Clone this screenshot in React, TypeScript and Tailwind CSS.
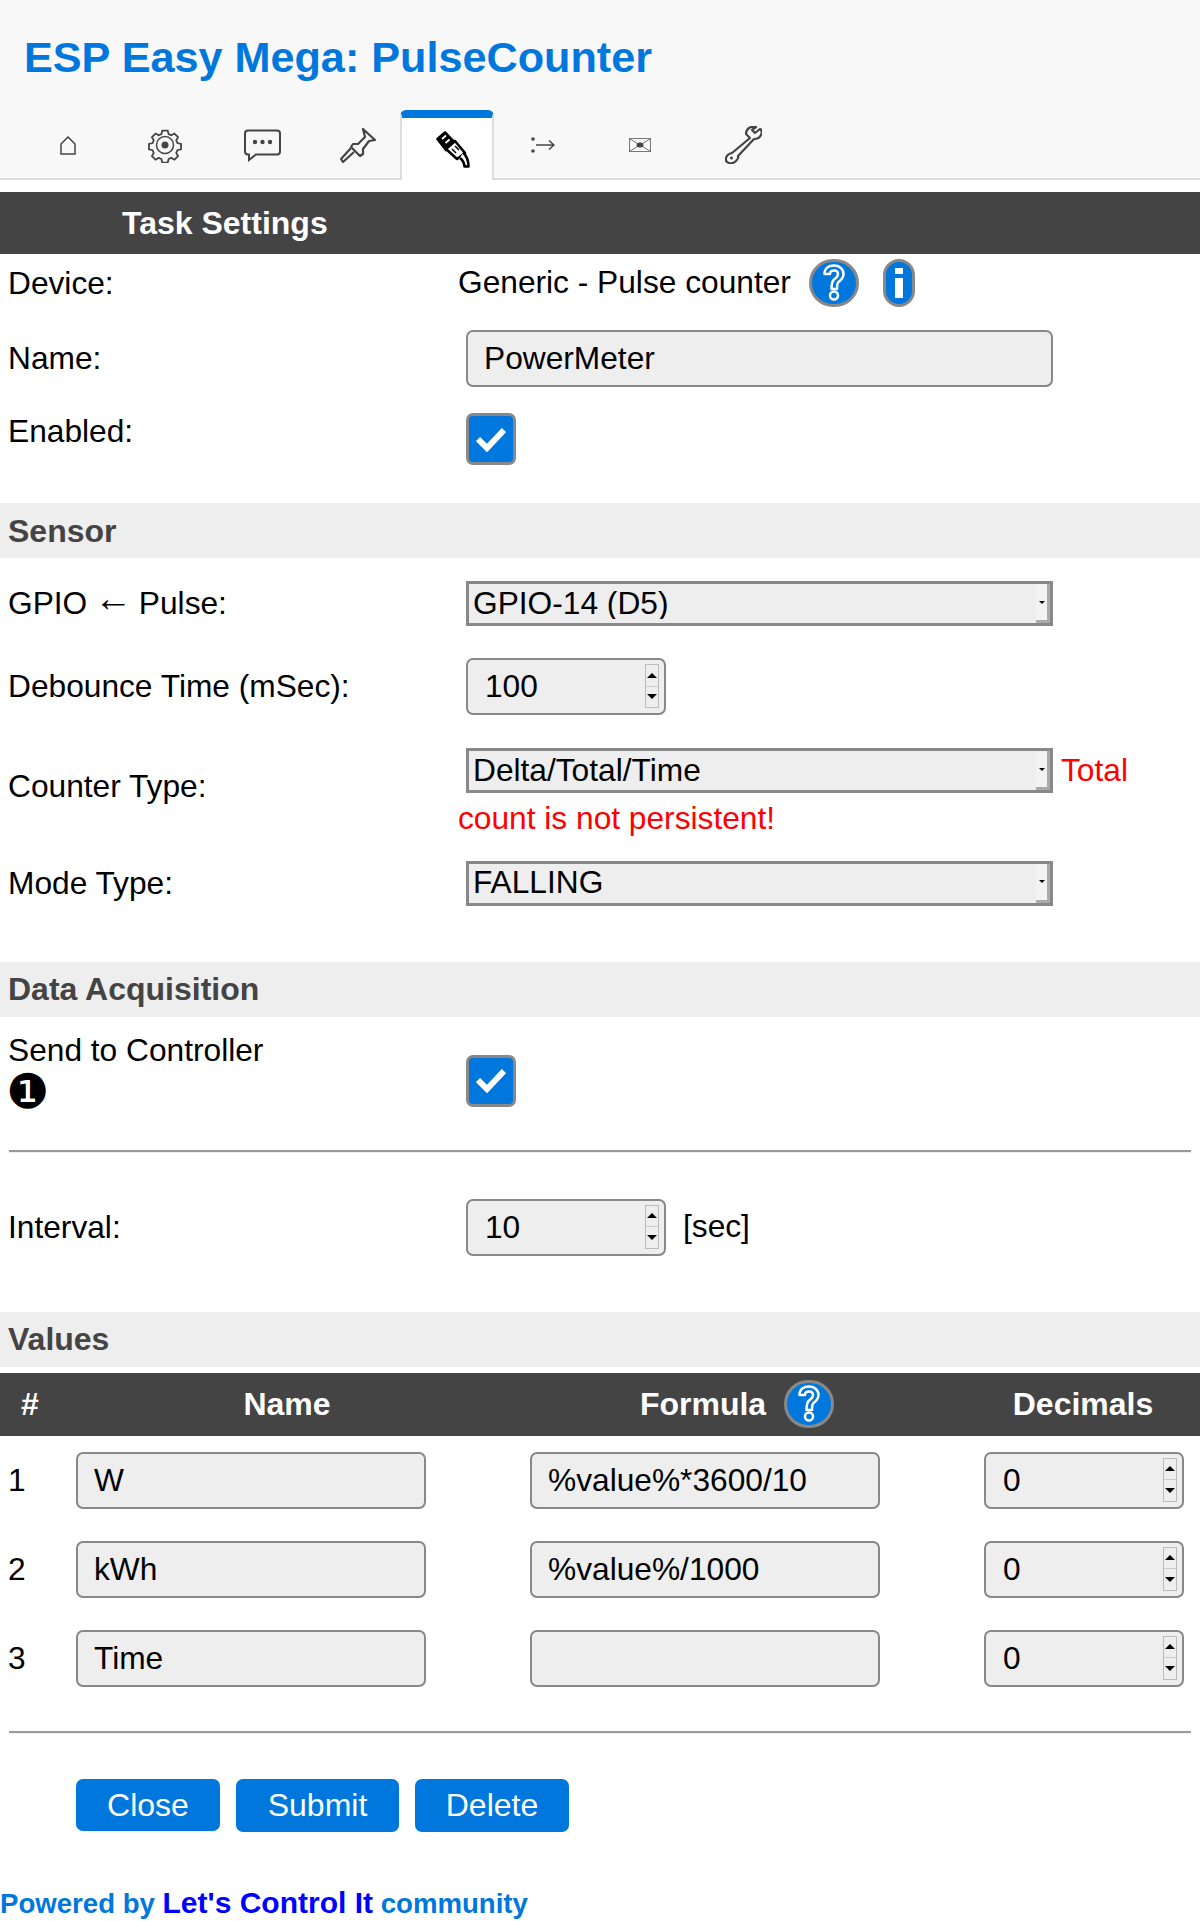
import React from "react"

const font = "font-['Liberation_Sans',Arial,sans-serif]"

const Gear = () => (
  <svg width="36" height="36" viewBox="0 0 36 36" fill="none" stroke="#444" strokeWidth="2">
    <path d="M15 2h6l1 4 3 1.300 3.500-2 4 4-2 3.500 1.300 3 4 1v6l-4 1-1.300 3 2 3.500-4 4-3.500-2-3 1.300-1 4h-6l-1-4-3-1.300-3.500 2-4-4 2-3.500-1.300-3-4-1v-6l4-1 1.300-3-2-3.500 4-4 3.500 2 3-1.300z" transform="translate(1.800 1.800) scale(.9)" />
    <circle cx="18" cy="18" r="8.500" strokeWidth="1.500" />
    <circle cx="18" cy="18" r="3.500" fill="#444" stroke="none" />
  </svg>
)

const Balloon = () => (
  <svg width="37" height="33" viewBox="0 0 37 33" fill="none" stroke="#444" strokeWidth="2">
    <path d="M4 1.500h29q3 0 3 3v18q0 3-3 3H12L5 31v-5.500H4q-3 0-3-3v-18q0-3 3-3z" />
    <circle cx="11" cy="13" r="2.200" fill="#444" stroke="none" />
    <circle cx="18.500" cy="13" r="2.200" fill="#444" stroke="none" />
    <circle cx="26" cy="13" r="2.200" fill="#444" stroke="none" />
  </svg>
)

const Pin = () => (
  <svg width="36" height="35" viewBox="0 0 36 35" fill="none" stroke="#444" strokeWidth="2.200" strokeLinejoin="round">
    <path d="M23 1l12 11-6 1-6 8 0 5-3 2-9-9 2-3h5l7-7z" />
    <path d="M11 20L1 31l2 3 11-10" />
  </svg>
)

const Plug = () => (
  <svg width="34" height="37" viewBox="0 0 34 37" fill="none" stroke="#000" strokeWidth="2.600" strokeLinejoin="round">
    <path d="M1.500 8L9 1.500 18 11l-8 8z" fill="#000" />
    <path d="M6 8l4-3.500M9.500 12l4-3.500" stroke="#fff" strokeWidth="1.800" />
    <path d="M10 18l9-8 10 12-8 6z" fill="#fff" />
    <path d="M16 18l4 4M19 15l4 4" strokeWidth="1.500" />
    <path d="M24 27q4 3 4.500 8.500h4q0-9-5.500-14" fill="#fff" />
  </svg>
)

const DotArrow = () => (
  <svg width="24" height="16" viewBox="0 0 24 16" fill="none" stroke="#444" strokeWidth="1.500">
    <circle cx="2" cy="2" r="1.800" fill="#444" stroke="none" />
    <circle cx="2" cy="14" r="1.800" fill="#444" stroke="none" />
    <path d="M5 8h18M18 3.500L23 8l-5 4.500" />
  </svg>
)

const Envelope = () => (
  <svg width="22" height="14" viewBox="0 0 22 14" fill="none" stroke="#777" strokeWidth="1">
    <rect x=".5" y=".5" width="21" height="13" />
    <path d="M1 1l20 12M21 1L1 13" />
    <ellipse cx="11" cy="7" rx="3.500" ry="2.500" fill="#444" stroke="none" />
  </svg>
)

const Wrench = () => (
  <svg width="37" height="38" viewBox="0 0 37 38" fill="none" stroke="#444" strokeWidth="2.200" strokeLinejoin="round">
    <path d="M25 12L7 27q-5 1-6 5t3 5q4 1 7-2t2-5l16-17q5 0 7-4t-1-6l-5 4-3-3 4-3q-4-1-7 1t-3 6z" />
    <circle cx="6.500" cy="32" r="1.500" fill="#444" stroke="none" />
  </svg>
)

const Home = () => (
  <svg width="16" height="19" viewBox="0 0 16 19" fill="none" stroke="#444" strokeWidth="1.500">
    <path d="M1 18V8l7-7 7 7v10z" />
  </svg>
)

const HelpIcon = () => (
  <span className="inline-flex h-[48px] w-[50px] items-center justify-center rounded-full border-[3px] border-[#888] bg-[#0077dd]">
    <svg width="22" height="38" viewBox="0 0 22 38" fill="none" stroke="#fff" strokeWidth="2.500" strokeLinejoin="round">
      <path d="M1.500 10C1.500 4 6 1.500 11 1.500s9.500 3 9.500 8.500c0 4.500-2.500 6-5 8-1.500 1.200-1.500 3-1.500 7H8.500c0-5 .2-7.500 2.500-9.500 2-1.800 4-2.500 4-5.500 0-2-1.500-3.500-4-3.500S7 8 7 10z" />
      <circle cx="11" cy="31.500" r="4" />
    </svg>
  </span>
)

const InfoIcon = () => (
  <span className="inline-flex h-[48px] w-[32px] items-center justify-center rounded-full border-[3px] border-[#888] bg-[#0077dd]">
    <svg width="10" height="30" viewBox="0 0 10 30" fill="#fff">
      <rect x="1" y="0" width="8" height="6" />
      <rect x="1" y="10" width="8" height="20" />
    </svg>
  </span>
)

const TextInput = ({ value, className }: { value: string; className: string }) => (
  <input
    readOnly
    value={value}
    className={`block h-[57px] rounded-[7px] border-2 border-[#888] bg-[#eee] pl-[16px] text-[31.7px] text-black outline-none ${font} ${className}`}
  />
)

const NumberInput = ({ value, className }: { value: string; className: string }) => (
  <div className={`relative h-[57px] ${className}`}>
    <input
      readOnly
      value={value}
      className={`block h-full w-full rounded-[7px] border-2 border-[#888] bg-[#eee] pl-[17px] text-[31.7px] text-black outline-none ${font}`}
    />
    <div className="absolute right-[7px] top-[6px] flex h-[44px] w-[14px] flex-col border border-[#bbb] bg-[#eee]">
      <div className="flex flex-1 items-center justify-center border-b border-[#ccc]">
        <div className="h-0 w-0 border-x-[5px] border-b-[5px] border-x-transparent border-b-black" />
      </div>
      <div className="flex flex-1 items-center justify-center">
        <div className="h-0 w-0 border-x-[5px] border-t-[5px] border-x-transparent border-t-black" />
      </div>
    </div>
  </div>
)

const Select = ({ value }: { value: string }) => (
  <div className="relative h-[45px] w-[587px]">
    <select className={`block h-full w-full appearance-none rounded-none border-[3px] border-[#888] bg-[#eee] pl-[4px] text-[31.7px] leading-none text-black outline-none ${font}`}>
      <option>{value}</option>
    </select>
    <div className="absolute bottom-[3px] right-[3px] top-[3px] flex w-[14px] items-center justify-center border-b-[3px] border-r-[3px] border-b-[#aaa] border-r-[#aaa] bg-[#f2f2f2]">
      <div className="h-0 w-0 border-x-[3px] border-t-[3px] border-x-transparent border-t-black" />
    </div>
  </div>
)

const CheckBox = () => (
  <div className="flex h-[52px] w-[50px] items-center justify-center rounded-[7px] border-[3px] border-[#888] bg-[#0077dd]">
    <svg width="30" height="25" viewBox="0 0 30 25" fill="none" stroke="#fff" strokeWidth="6">
      <path d="M2 12l9 9L28 3" />
    </svg>
  </div>
)

const SubHeader = ({ title, className }: { title: string; className: string }) => (
  <div className={`flex h-[55px] items-center bg-[#eee] pl-[8px] text-[32px] font-bold text-[#444] ${className}`}>{title}</div>
)

const Label = ({ children, className = "w-[466px]" }: { children: React.ReactNode; className?: string }) => (
  <div className={`shrink-0 pl-[8px] leading-[37px] ${className}`}>{children}</div>
)

const Rule = ({ className }: { className: string }) => (
  <div className={`mx-[9px] h-[3px] border-t-2 border-[#999] bg-[#eee] ${className}`} />
)

const tabs = [
  { w: "w-[95px]", icon: <Home /> },
  { w: "w-[100px]", icon: <Gear /> },
  { w: "w-[95px]", icon: <Balloon /> },
  { w: "w-[90px] pl-[6px]", icon: <Pin /> },
  { w: "w-[94px] pl-[12px]", icon: <Plug />, active: true },
  { w: "w-[98px]", icon: <DotArrow /> },
  { w: "w-[96px]", icon: <Envelope /> },
  { w: "w-[110px]", icon: <Wrench /> },
]

const rows = [
  { n: "1", name: "W", formula: "%value%*3600/10", mt: "mt-[16px]" },
  { n: "2", name: "kWh", formula: "%value%/1000", mt: "mt-[32px]" },
  { n: "3", name: "Time", formula: "", mt: "mt-[32px]" },
]

export default function App() {
  return (
    <div className={`h-[1921px] overflow-hidden bg-white text-[31.7px] text-black ${font}`}>
      <div className="h-[180px] border-b-2 border-[#ddd] bg-[#f8f8f8] pl-[24px]">
        <h1 className="pt-[30px] text-[43.2px] font-bold leading-[54px] text-[#0077dd]">ESP Easy Mega: PulseCounter</h1>
        <div className="-ml-[4px] mt-[26px] flex h-[70px]">
          {tabs.map((tab, index) => (
            <div
              key={index}
              className={`flex items-center justify-center ${tab.w} ${
                tab.active ? "h-[70px] rounded-t-[6px] border-x-2 border-t-[8px] border-x-[#ddd] border-t-[#0077dd] bg-white" : "h-[68px] pt-[2px]"
              }`}
            >
              {tab.icon}
            </div>
          ))}
        </div>
      </div>

      <div className="mt-[12px] flex h-[62px] items-center bg-[#444] pl-[122px] text-[32px] font-bold text-white">Task Settings</div>

      <div className="flex h-[58px] items-center">
        <Label className="w-[458px]">Device:</Label>
        <span>Generic - Pulse counter</span>
        <span className="ml-[18px] flex items-center gap-[24px]">
          <HelpIcon />
          <InfoIcon />
        </span>
      </div>

      <div className="mt-[18px] flex items-center">
        <Label>Name:</Label>
        <TextInput value="PowerMeter" className="w-[587px]" />
      </div>

      <div className="mt-[26px] flex items-start">
        <Label>Enabled:</Label>
        <CheckBox />
      </div>

      <SubHeader title="Sensor" className="mt-[38px]" />

      <div className="mt-[23px] flex items-center">
        <Label className="w-[466px] pb-[4px]">
          GPIO <span className="relative -top-[3px] -mx-[2px] font-['Liberation_Serif',serif] text-[38px] leading-none">←</span> Pulse:
        </Label>
        <Select value="GPIO-14 (D5)" />
      </div>

      <div className="mt-[32px] flex items-center">
        <Label>Debounce Time (mSec):</Label>
        <NumberInput value="100" className="w-[200px]" />
      </div>

      <div className="mt-[32px] flex items-start">
        <Label className="w-[458px] pt-[21px]">Counter Type:</Label>
        <div>
          <div className="ml-[8px] flex items-center gap-[8px]">
            <Select value="Delta/Total/Time" />
            <span className="text-[#f00]">Total</span>
          </div>
          <div className="mt-[5px] leading-[37px] text-[#f00]">count is not persistent!</div>
        </div>
      </div>

      <div className="mt-[24px] flex items-center">
        <Label>Mode Type:</Label>
        <Select value="FALLING" />
      </div>

      <SubHeader title="Data Acquisition" className="mt-[56px]" />

      <div className="mt-[15px] flex items-start">
        <Label>
          Send to Controller
          <div className="-ml-[2px] font-['DejaVu_Sans',sans-serif] text-[48px] leading-[44px]">❶</div>
        </Label>
        <div className="pt-[23px]">
          <CheckBox />
        </div>
      </div>

      <Rule className="mt-[37px]" />

      <div className="mt-[46px] flex items-center">
        <Label>Interval:</Label>
        <NumberInput value="10" className="w-[200px]" />
        <span className="ml-[17px]">[sec]</span>
      </div>

      <SubHeader title="Values" className="mt-[56px]" />

      <div className="mt-[6px] grid h-[63px] grid-cols-[60px_454px_446px_240px] items-center bg-[#444] text-center text-[32px] font-bold text-white">
        <span>#</span>
        <span>Name</span>
        <span className="flex items-center justify-center gap-[18px]">
          Formula
          <HelpIcon />
        </span>
        <span className="pl-[6px]">Decimals</span>
      </div>

      {rows.map((row) => (
        <div key={row.n} className={`grid grid-cols-[76px_454px_454px_200px] items-center ${row.mt}`}>
          <span className="pl-[8px] pt-[2px]">{row.n}</span>
          <TextInput value={row.name} className="w-[350px]" />
          <TextInput value={row.formula} className="w-[350px]" />
          <NumberInput value="0" className="w-[200px]" />
        </div>
      ))}

      <Rule className="mt-[44px]" />

      <div className="ml-[76px] mt-[45px] flex gap-[16px] text-[32px] text-white">
        <button className="h-[52px] w-[144px] rounded-[7px] bg-[#0077dd]">Close</button>
        <button className="h-[53px] w-[163px] rounded-[7px] bg-[#0077dd]">Submit</button>
        <button className="h-[53px] w-[154px] rounded-[7px] bg-[#0077dd]">Delete</button>
      </div>

      <div className="mt-[53px] whitespace-nowrap text-[27.6px] font-bold leading-[36px] text-[#0077dd]">
        Powered by <a className="text-[30px] text-[#00f]">Let's Control It</a> community
      </div>
    </div>
  )
}
